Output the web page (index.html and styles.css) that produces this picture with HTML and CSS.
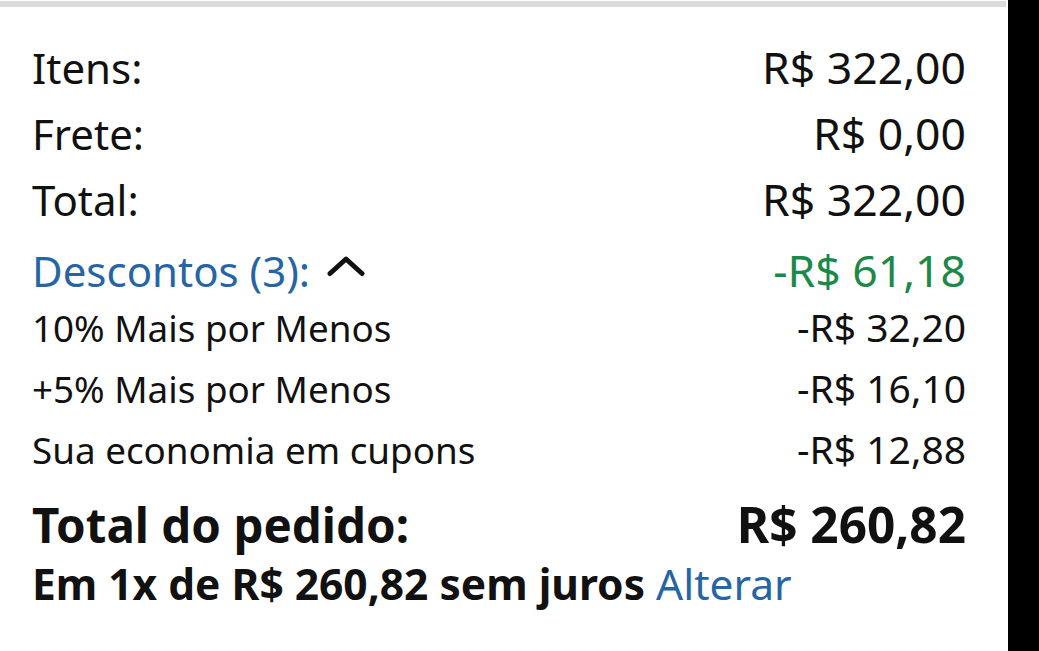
FILE: index.html
```html
<!DOCTYPE html>
<html lang="pt-BR">
<head>
<meta charset="utf-8">
<link rel="stylesheet" href="styles.css">
</head>
<body>
<div class="screen">
  <main class="panel">
    <div class="topline"></div>
    <section class="summary">
      <div class="row main"><span>Itens:</span><span class="val">R$ 322,00</span></div>
      <div class="row main"><span>Frete:</span><span class="val">R$ 0,00</span></div>
      <div class="row main"><span>Total:</span><span class="val">R$ 322,00</span></div>
      <div class="row main disc-head">
        <span class="link">Descontos (3):<svg class="caret" width="38" height="22" viewBox="0 0 38 22"><path d="M3 18.5 L19 4 L35 18.5" fill="none" stroke="#111" stroke-width="5" stroke-linecap="round" stroke-linejoin="round"/></svg></span>
        <span class="val green">-R$ 61,18</span>
      </div>
      <div class="row sub"><span>10% Mais por Menos</span><span class="val">-R$ 32,20</span></div>
      <div class="row sub"><span>+5% Mais por Menos</span><span class="val">-R$ 16,10</span></div>
      <div class="row sub"><span>Sua economia em cupons</span><span class="val">-R$ 12,88</span></div>
      <div class="row grand"><span>Total do pedido:</span><span class="val">R$ 260,82</span></div>
      <div class="install"><span class="bold">Em 1x de R$ 260,82 sem juros</span> <span class="link">Alterar</span></div>
    </section>
  </main>
  <div class="edge"></div>
</div>
</body>
</html>
```
FILE: styles.css
```css
html, body {
  margin: 0;
  padding: 0;
  background: #000;
}
.screen {
  display: flex;
  width: 1039px;
  height: 651px;
  overflow: hidden;
}
.panel {
  width: 1008px;
  background: #fff;
  display: flex;
  flex-direction: column;
}
.topline {
  margin-top: 1px;
  height: 6px;
  width: 1006px;
  background: #dcdcdc;
}
.edge {
  flex: 1;
  background: #000;
}
.summary {
  padding: 27px 42px 0 32px;
  font-family: "Noto Sans", "Open Sans", sans-serif;
  color: #111;
}
.row {
  display: flex;
  justify-content: space-between;
  align-items: baseline;
  white-space: nowrap;
}
.main {
  font-size: 42px;
  line-height: 65px;
}
.main .val {
  font-size: 44.5px;
}
.disc-head {
  margin-top: 12px;
  line-height: 52px;
}
.sub {
  font-size: 36.8px;
  line-height: 60px;
}
.sub .val {
  font-size: 39px;
}
.grand {
  margin-top: 13px;
  font-size: 47.5px;
  font-weight: 700;
  line-height: 63px;
}
.grand .val {
  font-size: 49.5px;
}
.install {
  font-size: 42.5px;
  line-height: 56px;
  white-space: nowrap;
}
.bold { font-weight: 700; }
.link { color: #2565a6; }
.green { color: #1b8948; }
.caret {
  vertical-align: 10px;
  margin-left: 17px;
}
```
